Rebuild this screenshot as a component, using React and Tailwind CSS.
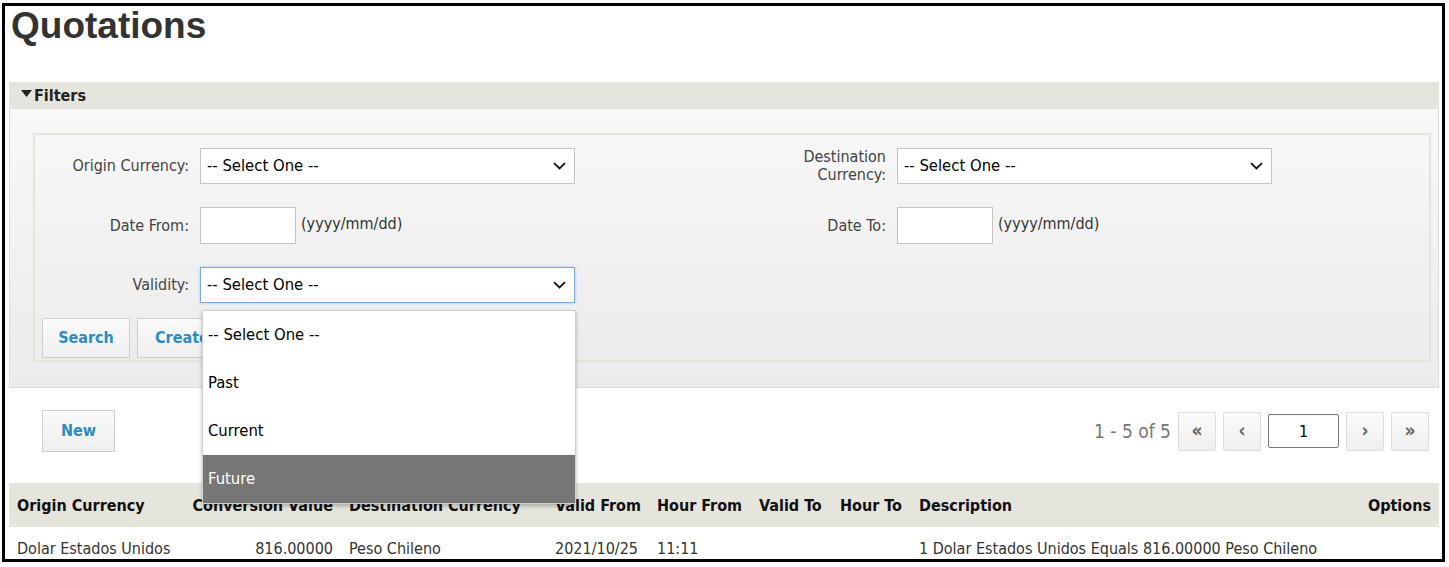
const FONT = "font-['DejaVu_Sans_Condensed','DejaVu_Sans',Tahoma,sans-serif]"

function Chevron() {
  return (
    <svg width="13" height="8" viewBox="0 0 13 8" className="shrink-0">
      <path d="M1 1.2l5.5 5.3 5.5-5.3" fill="none" stroke="#111" strokeWidth="1.8" />
    </svg>
  )
}

function Select({ focused = false }) {
  return (
    <div
      className={`flex h-[36px] w-[375px] items-center justify-between bg-white pl-[6px] pr-[8px] text-[16.5px] text-black ${
        focused ? 'border border-[#7fa8e3] shadow-[0_0_3px_#a9c9f0]' : 'border border-[#c3c3c3]'
      }`}
    >
      <span>-- Select One --</span>
      <Chevron />
    </div>
  )
}

function DateInput() {
  return (
    <div className="flex items-center">
      <div className="h-[37px] w-[96px] border border-[#c3c3c3] bg-white" />
      <span className="-mt-[3px] ml-[5px] text-[16px] text-[#333]">(yyyy/mm/dd)</span>
    </div>
  )
}

function Field({ label, children }) {
  return (
    <div className="flex items-center">
      <div className="w-[155px] pr-[1px] text-right text-[16px] leading-[18px] text-[#444]">{label}</div>
      <div className="ml-[10px]">{children}</div>
    </div>
  )
}

function Btn({ children, className = '' }) {
  return (
    <div
      className={`flex items-center justify-center whitespace-nowrap border border-[#cfcfcf] bg-gradient-to-b from-[#fafafa] to-[#efefef] text-[16px] font-bold text-[#2c8cc3] ${className}`}
    >
      {children}
    </div>
  )
}

function PageBtn({ children }) {
  return (
    <div className="flex h-[39px] w-[38px] items-center justify-center rounded-[2px] border border-[#dcdcdc] bg-gradient-to-b from-[#fbfbfb] to-[#efefef] pb-[2px] text-[19px] font-bold text-[#666]">
      {children}
    </div>
  )
}

const COLS = [
  { label: 'Origin Currency', w: 'w-[173px]', align: 'text-left pl-[8px]' },
  { label: 'Conversion Value', w: 'w-[159px]', align: 'text-right pr-[8px]' },
  { label: 'Destination Currency', w: 'w-[206px]', align: 'text-left pl-[8px]' },
  { label: 'Valid From', w: 'w-[102px]', align: 'text-left pl-[8px]' },
  { label: 'Hour From', w: 'w-[102px]', align: 'text-left pl-[8px]' },
  { label: 'Valid To', w: 'w-[81px]', align: 'text-left pl-[8px]' },
  { label: 'Hour To', w: 'w-[79px]', align: 'text-left pl-[8px]' },
  { label: 'Description', w: 'w-auto', align: 'text-left pl-[8px]' },
  { label: 'Options', w: 'w-[110px]', align: 'text-right pr-[8px]' },
]

const ROW = ['Dolar Estados Unidos', '816.00000', 'Peso Chileno', '2021/10/25', '11:11', '', '', '1 Dolar Estados Unidos Equals 816.00000 Peso Chileno', '']

export default function App() {
  return (
    <div className={`relative h-[567px] w-[1449px] overflow-hidden bg-white ${FONT}`}>
      <div className="ml-[2px] mt-[3px] h-[559px] w-[1443px] overflow-hidden border-[3px] border-black">
        <h1 className="pl-[6px] pt-[1px] font-['Liberation_Sans',Arial,sans-serif] text-[37px] font-bold leading-[37px] text-[#333]">
          Quotations
        </h1>

        <div className="relative ml-[4px] mr-[3px] mt-[38px]">
          {/* filters panel */}
          <div className="flex h-[27px] items-center bg-[#e6e5dd] pl-[12px] text-[16px] font-bold text-[#222]">
            <svg width="11" height="7" viewBox="0 0 11 7" className="mb-[5px] mr-[2px]">
              <path d="M0 0h11L5.5 7z" fill="#222" />
            </svg>
            Filters
          </div>
          <div className="border-x border-b border-[#dcdcd6] bg-gradient-to-b from-[#f8f8f8] to-[#ebebeb] pb-[25px] pl-[23px] pr-[7px] pt-[24px]">
            <div className="border-2 border-[#e4e4d9] bg-gradient-to-b from-[#f7f7f7] to-[#ececec] pb-[2px] pl-0 pt-[13px]">
              <div className="grid grid-cols-2 gap-y-[23px]">
                <Field label="Origin Currency:">
                  <Select />
                </Field>
                <Field
                  label={
                    <span>
                      Destination
                      <br />
                      Currency:
                    </span>
                  }
                >
                  <Select />
                </Field>
                <Field label="Date From:">
                  <DateInput />
                </Field>
                <Field label="Date To:">
                  <DateInput />
                </Field>
                <Field label="Validity:">
                  <Select focused />
                </Field>
                <div />
              </div>
              <div className="ml-[7px] mt-[15px] flex gap-[7px]">
                <Btn className="h-[40px] w-[88px]">Search</Btn>
                <Btn className="h-[40px] w-[140px] justify-start pl-[17px]">Create Excel</Btn>
              </div>
            </div>
          </div>

          {/* toolbar */}
          <div className="mt-[22px] flex items-center justify-between pl-[33px] pr-[10px]">
            <Btn className="h-[42px] w-[73px]">New</Btn>
            <div className="flex items-center gap-[7px]">
              <span className="text-[19px] text-[#777]">1 - 5 of 5</span>
              <PageBtn>«</PageBtn>
              <PageBtn>‹</PageBtn>
              <div className="flex h-[34px] w-[71px] items-center justify-center rounded-[2px] border border-[#777] bg-white pt-[2px] text-[16px] text-black">
                1
              </div>
              <PageBtn>›</PageBtn>
              <PageBtn>»</PageBtn>
            </div>
          </div>

          {/* table */}
          <table className="mt-[31px] w-full table-fixed border-collapse text-[16px]">
            <colgroup>
              {COLS.map((c) => (
                <col key={c.label} className={c.w} />
              ))}
            </colgroup>
            <thead>
              <tr className="h-[44px] bg-[#e6e5dd]">
                {COLS.map((c) => (
                  <th key={c.label} className={`whitespace-nowrap pt-[2px] font-bold text-[#111] ${c.align}`}>
                    {c.label}
                  </th>
                ))}
              </tr>
            </thead>
            <tbody>
              <tr className="h-[42px] bg-white">
                {ROW.map((v, i) => (
                  <td key={i} className={`whitespace-nowrap pt-[1px] text-[#333] ${COLS[i].align}`}>
                    {v}
                  </td>
                ))}
              </tr>
            </tbody>
          </table>

          {/* open dropdown of the Validity select */}
          <div className="absolute left-[193px] top-[228px] w-[374px] border border-[#cfcfcf] bg-white text-[16.5px] text-black shadow-[0_2px_4px_rgba(0,0,0,0.25)]">
            {['-- Select One --', 'Past', 'Current', 'Future'].map((o) => (
              <div
                key={o}
                className={`flex h-[48px] items-center pl-[5px] ${o === 'Future' ? 'bg-[#767676] text-white' : ''}`}
              >
                {o}
              </div>
            ))}
          </div>
        </div>
      </div>
    </div>
  )
}
